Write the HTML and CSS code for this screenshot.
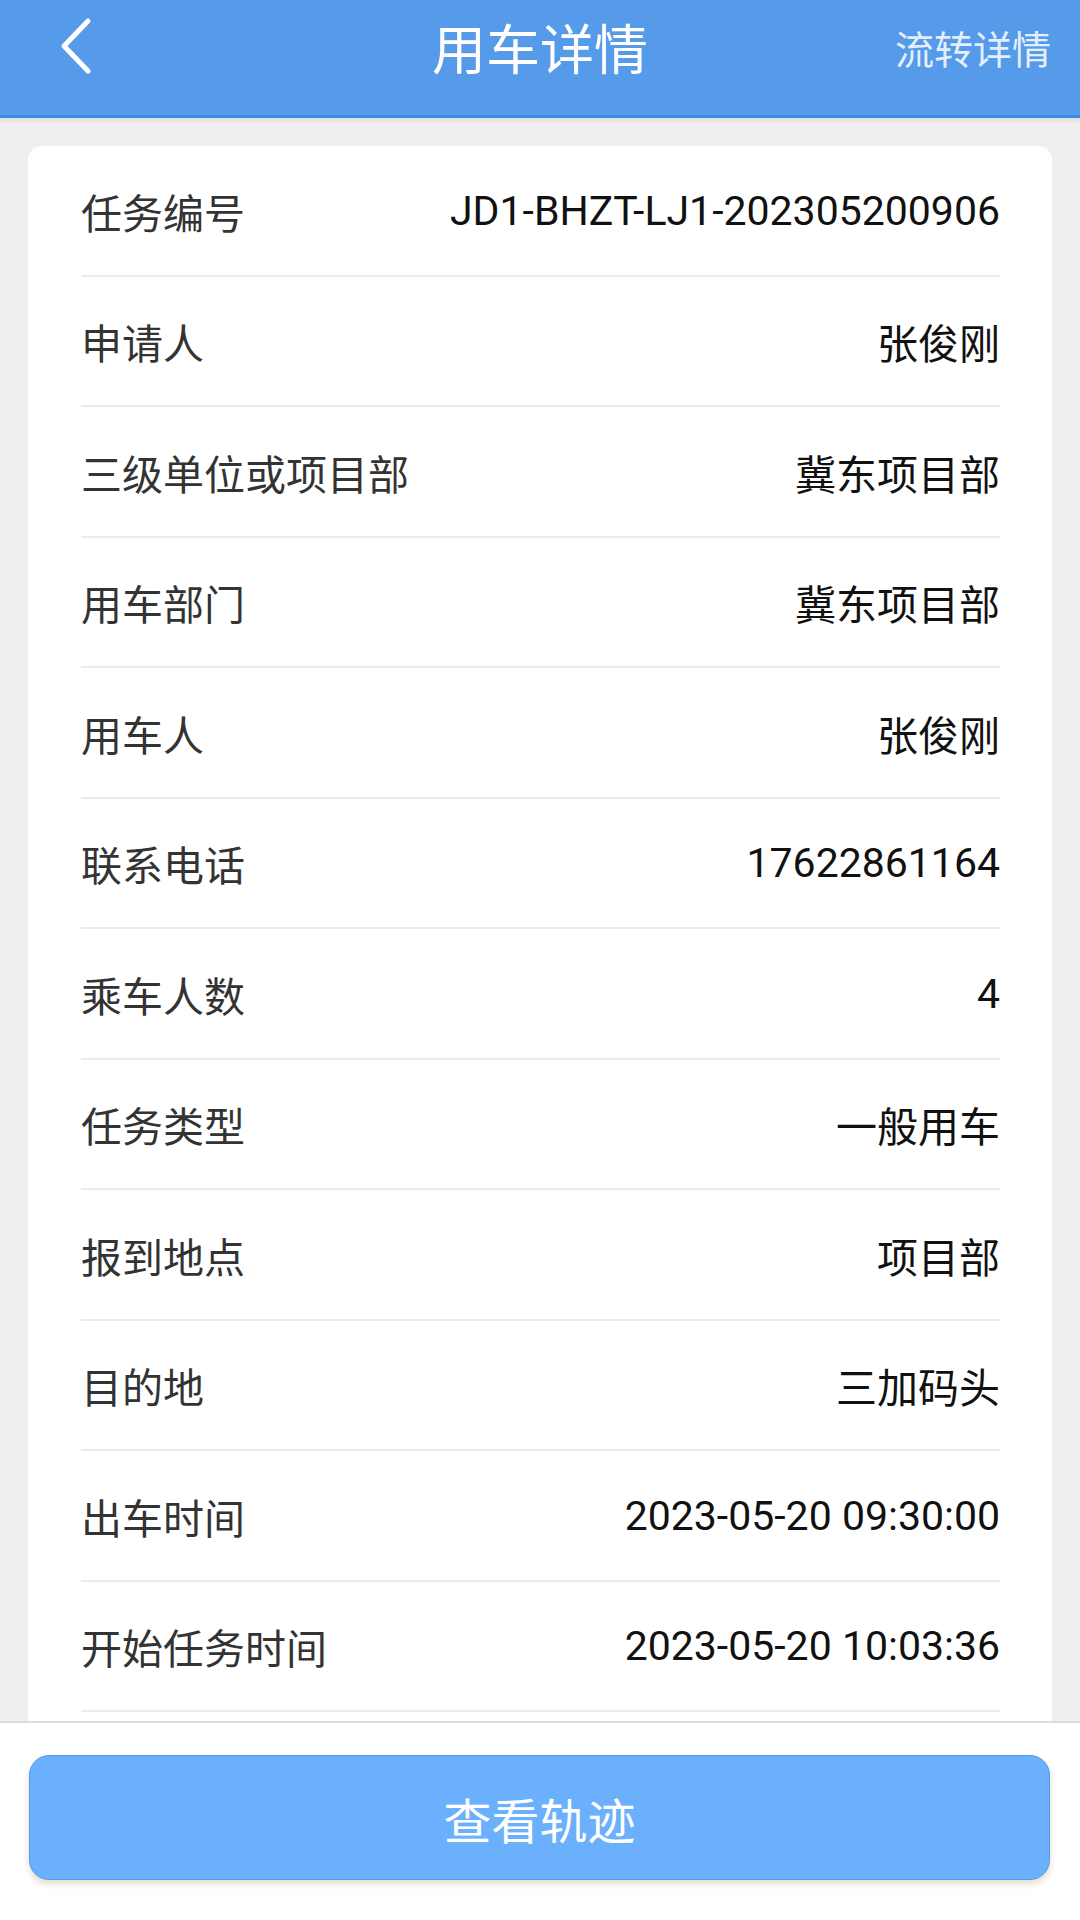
FILE: index.html
```html
<!DOCTYPE html>
<html lang="zh-CN">

<head>
  <meta charset="UTF-8" />
  <meta name="viewport" content="width=device-width, initial-scale=1.0" />
  <title>用车详情</title>
  <link rel="stylesheet" href="styles.css">
</head>

<body>
  <div class="page">

    <div class="header">
      <div class="back">
        <svg width="40" height="60" viewBox="0 0 40 60">
          <polyline points="30,4 6,29 30,54" fill="none" stroke="#fff" stroke-width="5" stroke-linecap="round" stroke-linejoin="round" />
        </svg>
      </div>
      <div class="title">用车详情</div>
      <div class="header-link">流转详情</div>
    </div>

    <div class="content">
      <div class="card">
        <div class="row"><span class="label">任务编号</span><span class="value">JD1-BHZT-LJ1-202305200906</span></div>
        <div class="row"><span class="label">申请人</span><span class="value">张俊刚</span></div>
        <div class="row"><span class="label">三级单位或项目部</span><span class="value">冀东项目部</span></div>
        <div class="row"><span class="label">用车部门</span><span class="value">冀东项目部</span></div>
        <div class="row"><span class="label">用车人</span><span class="value">张俊刚</span></div>
        <div class="row"><span class="label">联系电话</span><span class="value">17622861164</span></div>
        <div class="row"><span class="label">乘车人数</span><span class="value">4</span></div>
        <div class="row"><span class="label">任务类型</span><span class="value">一般用车</span></div>
        <div class="row"><span class="label">报到地点</span><span class="value">项目部</span></div>
        <div class="row"><span class="label">目的地</span><span class="value">三加码头</span></div>
        <div class="row"><span class="label">出车时间</span><span class="value">2023-05-20 09:30:00</span></div>
        <div class="row"><span class="label">开始任务时间</span><span class="value">2023-05-20 10:03:36</span></div>
      </div>
    </div>

    <div class="footer">
      <div class="btn">查看轨迹</div>
    </div>

  </div>
</body>

</html>
```

FILE: styles.css
```css
body {
  margin: 0;
  font-family: Roboto, 'Noto Sans CJK SC', sans-serif;
  background-color: #efefef;
}

.page {
  display: flex;
  flex-direction: column;
  height: 1920px;
  overflow: hidden;
}

.header {
  flex: 0 0 auto;
  height: 115px;
  background-color: #569be9;
  border-bottom: 3px solid #3f8ae3;
  box-shadow: 0 2px 4px rgba(120, 100, 60, 0.15);
  display: flex;
  align-items: center;
  position: relative;
  z-index: 2;
}

.back {
  flex: 0 0 220px;
  padding-left: 58px;
  padding-bottom: 22px;
  box-sizing: border-box;
  display: flex;
  align-items: center;
}

.title {
  flex: 1;
  text-align: center;
  color: #fff;
  font-size: 54px;
  padding-bottom: 22px;
}

.header-link {
  flex: 0 0 220px;
  box-sizing: border-box;
  padding-right: 29px;
  padding-bottom: 22px;
  text-align: right;
  color: rgba(255, 255, 255, 0.85);
  font-size: 39px;
  white-space: nowrap;
}

.content {
  flex: 1;
  overflow: hidden;
  padding: 28px 28px 0 28px;
}

.card {
  background-color: #fff;
  border-radius: 14px;
  padding: 0 52px 60px 53px;
}

.row {
  height: 130.5px;
  box-sizing: border-box;
  border-bottom: 2px solid #ebebeb;
  padding-top: 1px;
  display: flex;
  align-items: center;
  justify-content: space-between;
}

.label {
  font-size: 41px;
  color: #333;
}

.value {
  font-size: 41px;
  color: #111;
}

.footer {
  flex: 0 0 auto;
  height: 199px;
  background-color: #fff;
  border-top: 2px solid #dcdcdc;
  padding: 32px 30px 0 29px;
  box-sizing: border-box;
}

.btn {
  height: 125px;
  box-sizing: border-box;
  background-color: #6bb0fd;
  border: 1px solid #4f9cf5;
  border-radius: 20px;
  box-shadow: 0 4px 6px rgba(150, 120, 60, 0.25);
  display: flex;
  align-items: center;
  justify-content: center;
  color: #fff;
  font-size: 48px;
}
```
